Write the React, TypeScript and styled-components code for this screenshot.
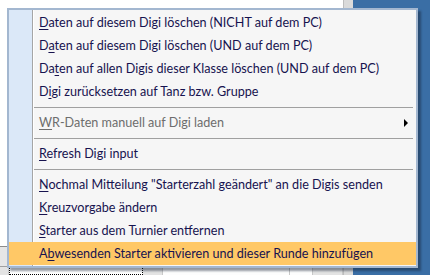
import styled, { createGlobalStyle } from "styled-components";

const GlobalStyle = createGlobalStyle`
  html, body {
    margin: 0;
    padding: 0;
  }
  body {
    font-family: Lato, "Noto Sans", sans-serif;
    background: #3a6ea5;
  }
`;

const Screen = styled.div`
  position: relative;
  width: 430px;
  height: 275px;
  display: grid;
  grid-template-columns: 353px 1fr;
  overflow: hidden;
  background: #3a6ea5;
`;

const AppArea = styled.div`
  display: grid;
  grid-template-columns: 343px 10px;
`;

const Workspace = styled.div`
  display: grid;
  grid-template-rows: 247px 20px 1fr;
  background: #ffffff;
`;

const WhitePane = styled.div`
  background: #ffffff;
  border-bottom: 1px solid #8c8c8c;
`;

const GrayBand = styled.div`
  background: #e6e6e6;
  border-bottom: 1px solid #a0a0a0;
`;

const BottomRow = styled.div`
  display: flex;
  background: #e3e3e3;
`;

const Cell = styled.div<{ $w: number; $light?: boolean; $focus?: boolean }>`
  width: ${(p) => p.$w}px;
  flex: none;
  box-sizing: border-box;
  background: ${(p) => (p.$light ? "#fdfdfd" : "#e3e3e3")};
  border-right: 1px solid #c8c8c8;
  ${(p) => p.$focus && "border: 1px dotted #000; background: #fff;"}
`;

const FrameEdge = styled.div`
  background: #dadada;
  border-left: 1px solid #bdbdbd;
`;

const Menu = styled.div`
  position: absolute;
  left: 7px;
  top: 8px;
  width: 411px;
  box-sizing: border-box;
  border: 2px solid #a3b7d0;
  padding: 1px 0;
  box-shadow: 3px 3px 2px rgba(20, 30, 50, 0.45);
  background: linear-gradient(
    to right,
    #dbe8f8 0 23px,
    #a6a6a6 23px 24px,
    #ffffff 24px 25px,
    #f6f6f6 25px
  );
  font-size: 12.6px;
`;

const Item = styled.div<{ $disabled?: boolean; $active?: boolean }>`
  height: 23px;
  display: flex;
  align-items: center;
  padding-left: 30px;
  padding-right: 8px;
  color: ${(p) => (p.$disabled ? "#6d6d6d" : "#17134f")};
  background: ${(p) => (p.$active ? "#ffc866" : "transparent")};
  white-space: nowrap;
`;

const Label = styled.span`
  flex: 1;
`;

const Key = styled.span`
  text-decoration: underline;
  text-underline-offset: 2px;
`;

const Arrow = styled.span`
  width: 0;
  height: 0;
  border-left: 4px solid #000;
  border-top: 4px solid transparent;
  border-bottom: 4px solid transparent;
`;

const Separator = styled.div`
  height: 8px;
  display: flex;
  align-items: center;
  padding-left: 25px;
  padding-right: 3px;

  &::after {
    content: "";
    flex: 1;
    height: 1px;
    background: #a0a0a0;
  }
`;

type Entry =
  | { sep: true }
  | { sep?: false; label: string; key: number; disabled?: boolean; submenu?: boolean; active?: boolean };

const entries: Entry[] = [
  { label: "Daten auf diesem Digi löschen (NICHT auf dem PC)", key: 0 },
  { label: "Daten auf diesem Digi löschen (UND auf dem PC)", key: 1 },
  { label: "Daten auf allen Digis dieser Klasse löschen (UND auf dem PC)", key: 2 },
  { label: "Digi zurücksetzen auf Tanz bzw. Gruppe", key: 1 },
  { sep: true },
  { label: "WR-Daten manuell auf Digi laden", key: 0, disabled: true, submenu: true },
  { sep: true },
  { label: "Refresh Digi input", key: 0 },
  { sep: true },
  { label: 'Nochmal Mitteilung "Starterzahl geändert" an die Digis senden', key: 0 },
  { label: "Kreuzvorgabe ändern", key: 0 },
  { label: "Starter aus dem Turnier entfernen", key: 0 },
  { label: "Abwesenden Starter aktivieren und dieser Runde hinzufügen", key: 1, active: true },
];

const renderLabel = (text: string, key: number) => (
  <Label>
    {text.slice(0, key)}
    <Key>{text.charAt(key)}</Key>
    {text.slice(key + 1)}
  </Label>
);

export default function App() {
  return (
    <>
      <GlobalStyle />
      <Screen>
        <AppArea>
          <Workspace>
            <WhitePane />
            <GrayBand />
            <BottomRow>
              <Cell $w={9} />
              <Cell $w={134} $focus />
              <Cell $w={20} />
              <Cell $w={127} $light />
              <Cell $w={23} $light />
              <Cell $w={30} />
            </BottomRow>
          </Workspace>
          <FrameEdge />
        </AppArea>
        <div />
        <Menu>
          {entries.map((e, i) =>
            e.sep ? (
              <Separator key={i} />
            ) : (
              <Item key={i} $disabled={e.disabled} $active={e.active}>
                {renderLabel(e.label, e.key)}
                {e.submenu && <Arrow />}
              </Item>
            )
          )}
        </Menu>
      </Screen>
    </>
  );
}
